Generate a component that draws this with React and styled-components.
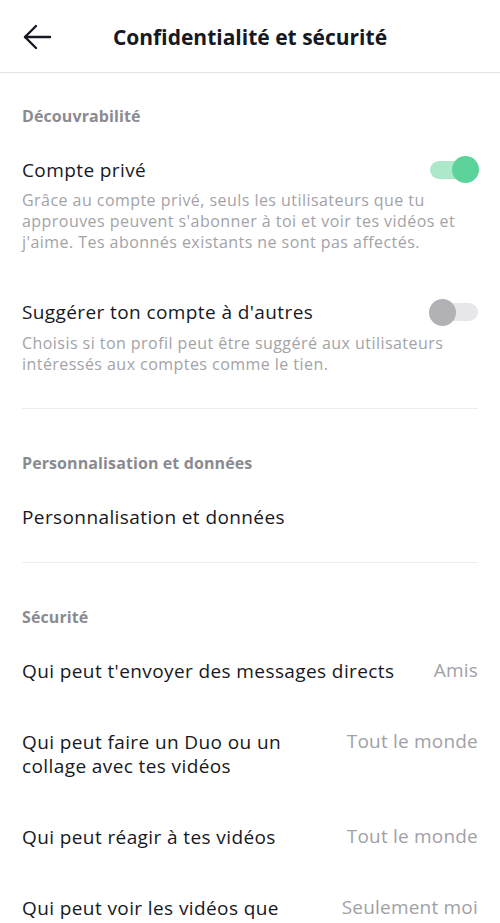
import React from 'react';
import styled, { createGlobalStyle } from 'styled-components';

const GlobalStyle = createGlobalStyle`
  body {
    margin: 0;
    background: #fff;
    font-family: 'Open Sans', 'Liberation Sans', sans-serif;
    color: #161823;
  }
`;

const Page = styled.div`
  width: 500px;
  height: 923px;
  overflow: hidden;
  background: #fff;
`;

const Header = styled.header`
  height: 72px;
  border-bottom: 1px solid #e2e2e4;
  display: flex;
  align-items: center;
  justify-content: center;
  position: relative;
`;

const BackButton = styled.button`
  position: absolute;
  left: 22px;
  top: 23px;
  width: 30px;
  height: 28px;
  padding: 0;
  border: none;
  background: none;
  display: flex;
  align-items: center;
  justify-content: center;
`;

const HeaderTitle = styled.h1`
  margin: 2px 0 0;
  font-size: 21px;
  font-weight: 700;
  color: #161823;
  line-height: 24px;
`;

const Content = styled.main`
  padding: 0 22px;
`;

const SectionTitle = styled.h2`
  margin: 0;
  padding: ${(p) => (p.$first ? '33px' : '44px')} 0 8px;
  font-size: 16px;
  line-height: 20px;
  letter-spacing: 0.1px;
  font-weight: 700;
  color: #8a8b91;
`;

const Row = styled.div`
  display: flex;
  align-items: flex-start;
  justify-content: space-between;
  gap: 20px;
  padding: 23.5px 0;
`;

const RowText = styled.div`
  flex: 1;
  min-width: 0;
`;

const RowHead = styled.div`
  display: flex;
  align-items: center;
  justify-content: space-between;
`;

const Label = styled.div`
  font-size: 19px;
  line-height: 24px;
  letter-spacing: 0.4px;
  color: #161823;
  max-width: ${(p) => p.$max || 'none'};
`;

const Description = styled.p`
  margin: 8.5px 0 0;
  font-size: 16px;
  line-height: 21px;
  letter-spacing: 0.45px;
  color: #a3a3a7;
`;

const Value = styled.div`
  font-size: 19px;
  line-height: 22px;
  letter-spacing: 0.2px;
  color: #a1a1a5;
  white-space: nowrap;
`;

const Divider = styled.hr`
  margin: 10px 0 0;
  border: none;
  border-top: 1px solid #ececee;
`;

const Track = styled.div`
  width: 48px;
  height: 18px;
  border-radius: 9px;
  background: ${(p) => (p.$on ? '#ace9cb' : '#e7e7e9')};
  position: relative;
  flex-shrink: 0;
`;

const Knob = styled.div`
  position: absolute;
  top: -4.5px;
  ${(p) => (p.$on ? 'right: -1px;' : 'left: -1px;')}
  width: 27px;
  height: 27px;
  border-radius: 50%;
  background: ${(p) => (p.$on ? '#5cd39b' : '#b1b1b6')};
`;

const Toggle = ({ on }) => (
  <Track $on={on}>
    <Knob $on={on} />
  </Track>
);

const BackArrow = () => (
  <svg width="30" height="28" viewBox="0 0 30 28" fill="none" stroke="#161823" strokeWidth="2.4" strokeLinecap="round" strokeLinejoin="round">
    <path d="M28 14H3" />
    <path d="M14 3L3 14l11 11" />
  </svg>
);

const ToggleRow = ({ label, description, on }) => (
  <Row>
    <RowText>
      <RowHead>
        <Label>{label}</Label>
        <Toggle on={on} />
      </RowHead>
      <Description>{description}</Description>
    </RowText>
  </Row>
);

const ValueRow = ({ label, value, max }) => (
  <Row>
    <Label $max={max}>{label}</Label>
    {value && <Value>{value}</Value>}
  </Row>
);

export default function App() {
  return (
    <Page>
      <GlobalStyle />
      <Header>
        <BackButton aria-label="Retour">
          <BackArrow />
        </BackButton>
        <HeaderTitle>Confidentialité et sécurité</HeaderTitle>
      </Header>
      <Content>
        <SectionTitle $first>Découvrabilité</SectionTitle>
        <ToggleRow
          on
          label="Compte privé"
          description="Grâce au compte privé, seuls les utilisateurs que tu approuves peuvent s'abonner à toi et voir tes vidéos et j'aime. Tes abonnés existants ne sont pas affectés."
        />
        <ToggleRow
          label="Suggérer ton compte à d'autres"
          description="Choisis si ton profil peut être suggéré aux utilisateurs intéressés aux comptes comme le tien."
        />
        <Divider />

        <SectionTitle>Personnalisation et données</SectionTitle>
        <ValueRow label="Personnalisation et données" />
        <Divider />

        <SectionTitle>Sécurité</SectionTitle>
        <ValueRow label="Qui peut t'envoyer des messages directs" value="Amis" />
        <ValueRow label="Qui peut faire un Duo ou un collage avec tes vidéos" value="Tout le monde" max="268px" />
        <ValueRow label="Qui peut réagir à tes vidéos" value="Tout le monde" />
        <ValueRow label="Qui peut voir les vidéos que tu as aimées" value="Seulement moi" max="268px" />
      </Content>
    </Page>
  );
}
